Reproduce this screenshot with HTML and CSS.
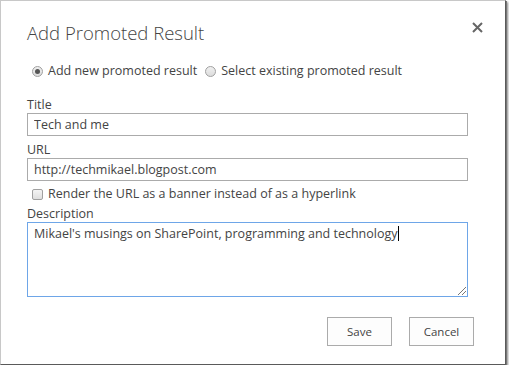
FILE: index.html
```html
<!DOCTYPE html>
<html lang="en">
<head>
    <meta charset="UTF-8">
    <title>Add Promoted Result</title>
    <link rel="stylesheet" href="styles.css">
</head>
<body>
    <div class="dialog">
        <div class="dialog-head">
            <h1>Add Promoted Result</h1>
            <button class="close" aria-label="Close">
                <svg width="11" height="11" viewBox="0 0 11 11">
                    <path d="M1 1 L10 10 M10 1 L1 10" stroke="#666" stroke-width="2" fill="none"/>
                </svg>
            </button>
        </div>

        <div class="choice">
            <label class="option"><span class="radio checked"></span>Add new promoted result</label>
            <label class="option"><span class="radio"></span>Select existing promoted result</label>
        </div>

        <div class="field">
            <label>Title</label>
            <input class="text" type="text" value="Tech and me">
        </div>
        <div class="field">
            <label>URL</label>
            <input class="text" type="text" value="http://techmikael.blogpost.com">
        </div>
        <label class="option check-row"><span class="checkbox"></span>Render the URL as a banner instead of as a hyperlink</label>
        <div class="field">
            <label>Description</label>
            <div class="textarea">Mikael's musings on SharePoint, programming and technology<span class="caret"></span></div>
        </div>

        <div class="actions">
            <button class="btn">Save</button>
            <button class="btn">Cancel</button>
        </div>
    </div>
</body>
</html>
```

FILE: styles.css
```css
* {
    margin: 0;
    padding: 0;
    box-sizing: border-box;
}
body {
    background: #fff;
    font-family: 'Open Sans', 'Noto Sans', sans-serif;
    color: #444;
}
.dialog {
    width: 506px;
    height: 365px;
    background: #fff;
    border-top: 1px solid #c8c8c8;
    border-left: 1px solid #c8c8c8;
    border-right: 1px solid #5a5a5a;
    border-bottom: 1px solid #5a5a5a;
    box-shadow: 1px 1px 0 #777, 2px 2px 2px rgba(0, 0, 0, 0.45);
    padding: 0 32px 0 26px;
}
.dialog-head {
    display: flex;
    justify-content: space-between;
    align-items: flex-start;
    padding-top: 18px;
}
h1 {
    font-size: 18.5px;
    font-weight: 300;
    color: #444;
    line-height: 28px;
}
.close {
    background: none;
    border: none;
    margin-top: 2px;
    margin-right: -10px;
    width: 12px;
    height: 12px;
}
.choice {
    display: flex;
    gap: 8px;
    margin-top: 15px;
    padding-left: 5px;
}
.option {
    display: flex;
    align-items: center;
    gap: 5px;
    font-size: 12.5px;
    line-height: 18px;
    color: #444;
}
.radio {
    width: 11px;
    height: 11px;
    border-radius: 50%;
    border: 1px solid #a0a0a0;
    background: linear-gradient(#f0f0f0, #dcdcdc);
    display: flex;
    align-items: center;
    justify-content: center;
}
.radio.checked::after {
    content: '';
    width: 5px;
    height: 5px;
    border-radius: 50%;
    background: #555;
}
.field {
    display: flex;
    flex-direction: column;
    margin-top: 5px;
}
.choice + .field {
    margin-top: 16px;
}
.field label {
    font-size: 12.5px;
    line-height: 17px;
    color: #444;
}
.text {
    width: 441px;
    height: 23px;
    border: 1px solid #ababab;
    padding: 0 6px;
    font-family: inherit;
    font-size: 12.5px;
    color: #444;
    outline: none;
}
.check-row {
    margin-top: 4px;
    padding-left: 5px;
}
.checkbox {
    width: 11px;
    height: 11px;
    border: 1px solid #a0a0a0;
    border-radius: 2px;
    background: linear-gradient(#f4f4f4, #dedede);
}
.check-row + .field {
    margin-top: 2px;
}
.textarea {
    position: relative;
    width: 441px;
    height: 75px;
    border: 1px solid #6ea6e8;
    padding: 2px 6px;
    font-size: 12.5px;
    line-height: 18px;
    color: #444;
}
.caret {
    display: inline-block;
    width: 1px;
    height: 15px;
    background: #000;
    vertical-align: -3px;
}
.textarea::after {
    content: '';
    position: absolute;
    right: 1px;
    bottom: 1px;
    width: 8px;
    height: 8px;
    background: linear-gradient(135deg, transparent 45%, #777 45%, #777 52%, transparent 52%, transparent 70%, #777 70%, #777 77%, transparent 77%);
}
.actions {
    display: flex;
    justify-content: flex-end;
    gap: 17px;
    margin-top: 20px;
    margin-right: -1px;
}
.btn {
    width: 65px;
    height: 29px;
    background: #fdfdfd;
    border: 1px solid #ababab;
    font-family: inherit;
    font-size: 11.5px;
    color: #444;
}
```
